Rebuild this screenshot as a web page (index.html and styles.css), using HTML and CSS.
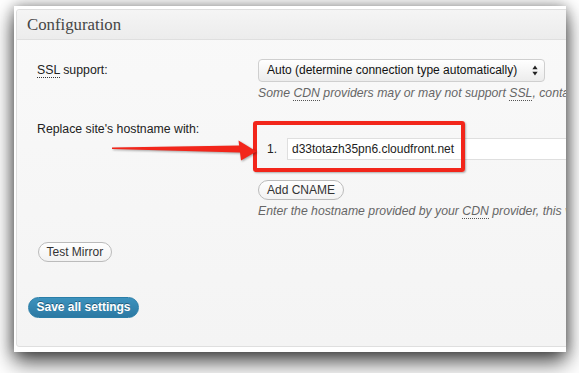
FILE: index.html
```html
<!DOCTYPE html>
<html lang="en">
<head>
<meta charset="utf-8">
<title>CDN Configuration</title>
<link rel="stylesheet" href="styles.css">
</head>
<body>
<div class="stage">
  <div class="window">
    <div class="panel">
      <div class="panel-head"><h3>Configuration</h3></div>
      <div class="panel-body">
        <div class="form">
          <div class="row row-ssl">
            <div class="label"><abbr class="abbr">SSL</abbr> support:</div>
            <div class="field">
              <div class="select">
                <span class="select-text">Auto (determine connection type automatically)</span>
                <svg class="select-arrows" width="6" height="11" viewBox="0 0 6 11" aria-hidden="true">
                  <path d="M3 0.5 L5.6 4.2 L0.4 4.2 Z" fill="#222"/>
                  <path d="M3 10.5 L5.6 6.8 L0.4 6.8 Z" fill="#222"/>
                </svg>
              </div>
              <p class="desc">Some <abbr class="abbr">CDN</abbr> providers may or may not support <abbr class="abbr">SSL</abbr>, contact your vendor for more information.</p>
            </div>
          </div>
          <div class="row row-host">
            <div class="label">Replace site's hostname with:</div>
            <div class="field field-host">
              <ol class="cnames">
                <li class="cname"><span class="num">1.</span><span class="text-input">d33totazh35pn6.cloudfront.net</span></li>
              </ol>
              <button class="btn btn-add" type="button">Add CNAME</button>
              <p class="desc desc-host">Enter the hostname provided by your <abbr class="abbr">CDN</abbr> provider, this value will replace your site's hostname in the HTML.</p>
            </div>
          </div>
          <div class="row row-test">
            <button class="btn" type="button">Test Mirror</button>
          </div>
        </div>
        <p class="submit"><button class="btn-primary" type="button">Save all settings</button></p>
      </div>
    </div>
    <div class="annot-box"></div>
    <svg class="annot-arrow" width="170" height="40" viewBox="0 0 170 40" aria-hidden="true">
      <path d="M12 17.6 L140 15.6 L140 22.6 L12 18.9 Z" fill="#f2261b"/>
      <path d="M138.5 10.5 L156.5 21.6 L141 30.5 Z" fill="#f2261b"/>
    </svg>
  </div>
</div>
</body>
</html>
```
FILE: styles.css
```css
html, body {
  margin: 0;
  padding: 0;
  background: #ffffff;
}

body {
  font-family: "Liberation Sans", Arial, Helvetica, sans-serif;
  color: #333333;
  width: 579px;
  height: 373px;
  overflow: hidden;
}

.stage {
  padding: 6px 13px 21px 14px;
}

.window {
  position: relative;
  width: 552px;
  height: 346px;
  box-sizing: border-box;
  padding: 3px 0 0 2px;
  background: #ffffff;
  overflow: hidden;
  box-shadow: 0 10px 20px rgba(0, 0, 0, 0.7), 0 0 12px rgba(0, 0, 0, 0.35);
}

.panel {
  width: 640px;
  height: 338px;
  box-sizing: border-box;
  border: 1px solid #dfdfdf;
  border-radius: 3px;
  background: linear-gradient(#f9f9f9, #f4f4f4);
}

.panel-head {
  height: 29px;
  border-bottom: 1px solid #dfdfdf;
  background: linear-gradient(#f5f5f5, #ececec);
  border-radius: 3px 3px 0 0;
}

.panel-head h3 {
  margin: 0;
  padding-left: 10px;
  font-family: "Liberation Serif", Georgia, serif;
  font-weight: normal;
  font-size: 16.8px;
  line-height: 29px;
  color: #464646;
}

.panel-body {
  padding: 19px 0 0 11px;
}

.form {
  margin-left: 9px;
}

.row {
  display: grid;
  grid-template-columns: 221px 1fr;
}

.label {
  font-size: 12.3px;
  color: #222222;
}

.row-ssl .label {
  line-height: 23px;
}

.row-host {
  margin-top: 20px;
}

.row-host .label {
  line-height: 16px;
}

.abbr {
  text-decoration: none;
  border-bottom: 1px dotted #333333;
}

.select {
  display: flex;
  align-items: center;
  justify-content: space-between;
  width: 287px;
  height: 23px;
  box-sizing: border-box;
  padding: 0 6px 0 8px;
  border: 1px solid #cfcfcf;
  border-radius: 4px;
  background: linear-gradient(#ffffff, #ececec);
  font-size: 12px;
  color: #111111;
  line-height: 21px;
}

.select-text {
  white-space: nowrap;
}

.select-arrows {
  display: block;
}

.desc {
  margin: 3px 0 0;
  font-size: 12.25px;
  line-height: 16px;
  font-style: italic;
  color: #666666;
  white-space: nowrap;
}

.desc .abbr {
  border-bottom-color: #555555;
}

.field-host {
  padding-top: 17px;
}

.cnames {
  list-style: none;
  margin: 0;
  padding: 0 0 0 9px;
}

.cname {
  display: flex;
  align-items: center;
  height: 22px;
  font-size: 12px;
}

.num {
  width: 20px;
  color: #222222;
}

.text-input {
  display: block;
  width: 400px;
  height: 22px;
  box-sizing: border-box;
  padding: 0 4px;
  border: 1px solid #dfdfdf;
  background: #ffffff;
  line-height: 20px;
  color: #222222;
  white-space: nowrap;
}

.btn {
  display: block;
  height: 20px;
  box-sizing: border-box;
  padding: 0 7.5px;
  border: 1px solid #bbbbbb;
  border-radius: 11px;
  background: linear-gradient(#fefefe, #f2f2f2);
  font-family: "Liberation Sans", Arial, Helvetica, sans-serif;
  font-size: 12px;
  line-height: 18px;
  color: #333333;
}

.btn-add {
  margin-top: 20px;
  padding: 0 8px;
}

.row-test {
  margin-top: 23px;
  display: block;
}

.row-test .btn {
  margin-left: 1px;
}

.submit {
  margin: 35px 0 0;
}

.btn-primary {
  display: block;
  height: 21px;
  box-sizing: border-box;
  padding: 0 7.5px;
  border: 1px solid #2a7ea8;
  border-radius: 11px;
  background: linear-gradient(#3d92bd, #2c79a3);
  font-family: "Liberation Sans", Arial, Helvetica, sans-serif;
  font-size: 12px;
  font-weight: bold;
  line-height: 19px;
  color: #ffffff;
  text-shadow: 0 -1px 0 rgba(0, 0, 0, 0.35);
}

.annot-box {
  position: absolute;
  left: 239px;
  top: 115px;
  width: 212px;
  height: 51px;
  box-sizing: border-box;
  border: 4px solid #f2261b;
  border-radius: 3px;
  box-shadow: 1px 1px 2px rgba(0, 0, 0, 0.3);
}

.annot-arrow {
  position: absolute;
  left: 86px;
  top: 124px;
  filter: drop-shadow(1px 1px 1px rgba(0, 0, 0, 0.35));
}
```
